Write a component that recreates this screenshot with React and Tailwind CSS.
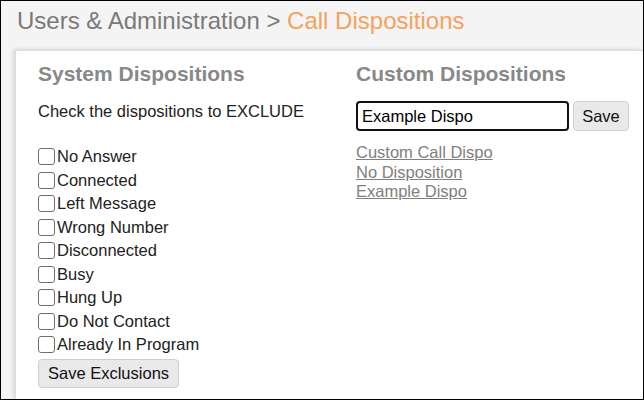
import React, { useState } from 'react';

const systemDispos = [
  'No Answer',
  'Connected',
  'Left Message',
  'Wrong Number',
  'Disconnected',
  'Busy',
  'Hung Up',
  'Do Not Contact',
  'Already In Program',
];

const customDispos = ['Custom Call Dispo', 'No Disposition', 'Example Dispo'];

export default function App() {
  const [name, setName] = useState('Example Dispo');
  const [excluded, setExcluded] = useState({});

  return (
    <div
      className="w-[644px] h-[400px] overflow-hidden border border-black bg-[#f4f4f4] flex flex-col"
      style={{ fontFamily: '"Liberation Sans", Arial, sans-serif' }}
    >
      {/* Breadcrumb */}
      <div className="h-[49px] pl-[16px] pt-[6px] text-[24px] leading-[28px] text-[#7a7a7a]">
        Users &amp; Administration &gt; <span className="text-[#f7a15e]">Call Dispositions</span>
      </div>

      {/* Card */}
      <div className="flex-1 ml-[14px] bg-white border-t border-l border-[#dcdcdc] shadow-[-2px_-1px_4px_rgba(0,0,0,0.12)] flex">
        {/* System dispositions */}
        <div className="w-[318px] pl-[22px] pt-[12px]">
          <h2 className="text-[21px] leading-[22px] font-bold text-[#888]">System Dispositions</h2>
          <p className="mt-[17px] text-[16.5px] leading-[18px] text-[#222]">Check the dispositions to EXCLUDE</p>
          <ul className="mt-[25px]">
            {systemDispos.map((d) => (
              <li key={d} className="flex items-center h-[23.5px]">
                <input
                  type="checkbox"
                  checked={!!excluded[d]}
                  onChange={() => setExcluded({ ...excluded, [d]: !excluded[d] })}
                  className="appearance-none w-[17px] h-[17px] border-[1.5px] border-[#6f6f6f] rounded-[3px] bg-white checked:bg-[#0075ff] checked:border-[#0075ff]"
                />
                <span className="ml-[2px] text-[16.5px] text-[#222]">{d}</span>
              </li>
            ))}
          </ul>
          <button className="mt-[2px] h-[29px] px-[9px] bg-[#e9e9e9] border border-[#cfcfcf] rounded-[4px] text-[16.5px] text-[#111]">
            Save Exclusions
          </button>
        </div>

        {/* Custom dispositions */}
        <div className="flex-1 pl-[22px] pt-[12px]">
          <h2 className="text-[21px] leading-[22px] font-bold text-[#888]">Custom Dispositions</h2>
          <div className="mt-[16px] flex items-center gap-[4px]">
            <input
              value={name}
              onChange={(e) => setName(e.target.value)}
              className="w-[213px] h-[30px] px-[4px] border-2 border-[#111] rounded-[4px] text-[16.5px] text-black outline-none"
            />
            <button className="h-[30px] w-[56px] bg-[#e9e9e9] border border-[#cfcfcf] rounded-[4px] text-[16.5px] text-[#111]">
              Save
            </button>
          </div>
          <ul className="mt-[12px]">
            {customDispos.map((d) => (
              <li key={d} className="leading-[19.5px]">
                <a href="#" className="text-[16.5px] text-[#808080] underline">{d}</a>
              </li>
            ))}
          </ul>
        </div>
      </div>
    </div>
  );
}
